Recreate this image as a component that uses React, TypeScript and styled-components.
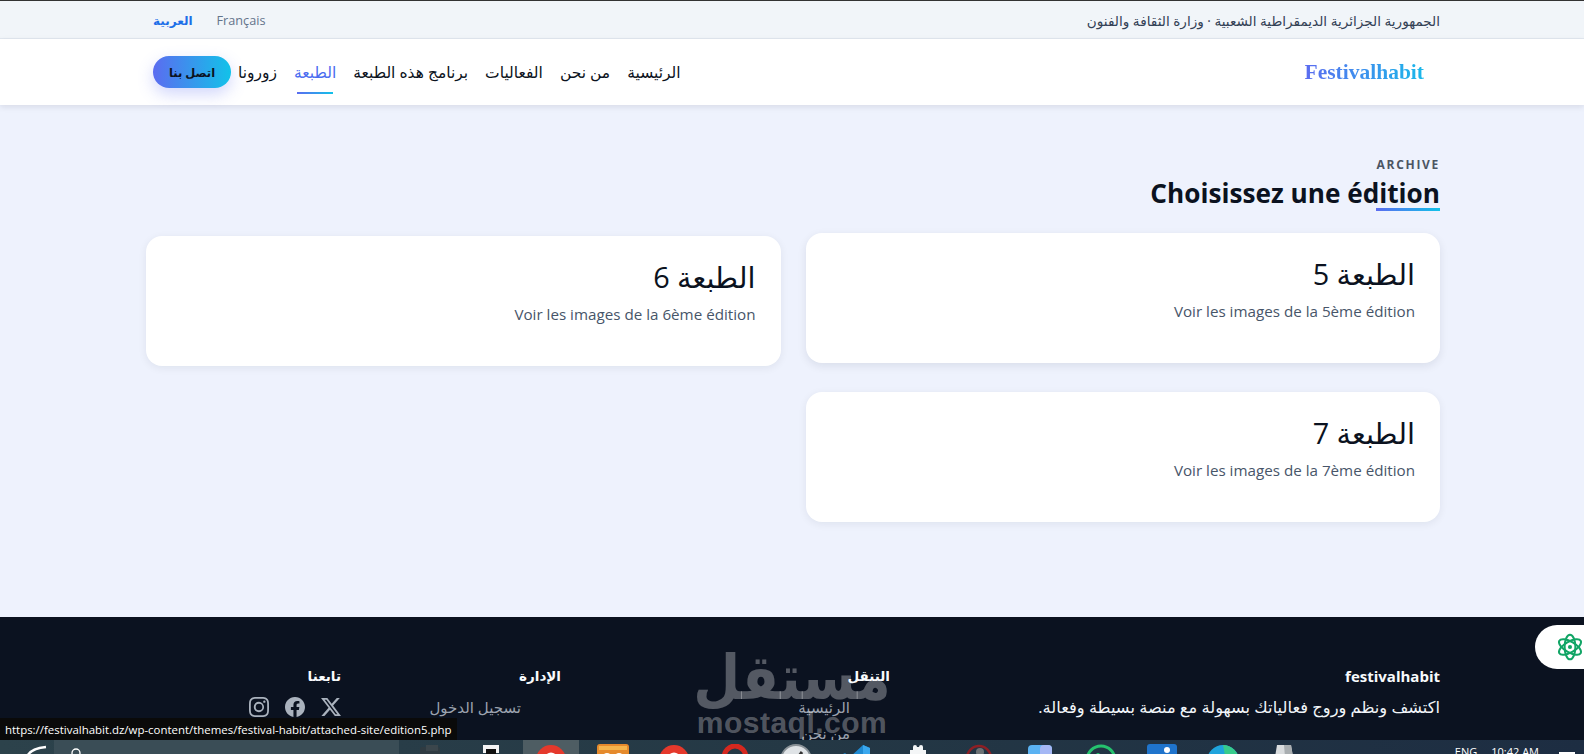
import React from 'react';
import styled, { createGlobalStyle } from 'styled-components';
import { BsFacebook, BsInstagram, BsTwitterX } from 'react-icons/bs';

const GRADIENT = 'linear-gradient(90deg, #5b6cf0, #12c2e9)';
const FONT = '"Open Sans", "DejaVu Sans", sans-serif';

const GlobalStyle = createGlobalStyle`
  html, body {
    margin: 0;
    height: 754px;
    overflow: hidden;
    background: #eef2fd;
    font-family: ${FONT};
  }
  * { box-sizing: border-box; }
`;

const Screen = styled.div`
  height: 754px;
  display: flex;
  flex-direction: column;
`;
const Viewport = styled.div`
  position: relative;
  flex: 1;
  min-height: 0;
  overflow: hidden;
  direction: rtl;
  display: flex;
  flex-direction: column;
  background: #eef2fd;
`;
const Container = styled.div`
  width: 1294px;
  margin-right: 144px;
`;

const TopStrip = styled.div`
  height: 39px;
  flex: none;
  padding-top: 1px;
  background: #f1f5f9;
  border-top: 1px solid #333;
  border-bottom: 1px solid #e2e8f0;
`;
const TopStripInner = styled(Container)`
  height: 100%;
  display: flex;
  align-items: center;
  justify-content: space-between;
`;
const Ministry = styled.span`
  font-size: 13.6px;
  color: #334155;
`;
const Langs = styled.div`
  display: flex;
  align-items: center;
  gap: 24px;
  padding-left: 7px;
`;
const Lang = styled.a<{ $active?: boolean }>`
  font-size: ${(p) => (p.$active ? '12px' : '12.7px')};
  font-weight: ${(p) => (p.$active ? 700 : 400)};
  color: ${(p) => (p.$active ? '#1d6fe8' : '#64748b')};
`;

const NavBar = styled.header`
  position: relative;
  z-index: 2;
  height: 66px;
  flex: none;
  background: #fff;
  box-shadow: 0 2px 6px rgba(15, 23, 42, 0.1);
`;
const NavInner = styled(Container)`
  height: 100%;
  display: flex;
  align-items: center;
  justify-content: space-between;
`;
const Logo = styled.div`
  padding-right: 16px;
  font-family: "Liberation Serif", serif;
  font-weight: 700;
  font-size: 21.5px;
  direction: ltr;
  background: ${GRADIENT};
  -webkit-background-clip: text;
  background-clip: text;
  color: transparent;
`;
const NavLinks = styled.nav`
  display: flex;
  align-items: center;
  gap: 17px;
  padding-left: 7px;
`;
const NavLink = styled.a<{ $active?: boolean }>`
  position: relative;
  font-size: 15.5px;
  line-height: 21px;
  font-weight: 500;
  color: ${(p) => (p.$active ? '#4a6cf0' : '#0b1220')};
  ${(p) =>
    p.$active &&
    `&::after {
      content: '';
      position: absolute;
      right: 3px;
      left: 3px;
      bottom: -11px;
      height: 2px;
      background: ${GRADIENT};
    }`}
`;
const ContactButton = styled.a`
  width: 78px;
  height: 32px;
  margin-right: -10px;
  border-radius: 16px;
  display: flex;
  align-items: center;
  justify-content: center;
  font-size: 11.5px;
  font-weight: 700;
  color: #0b1220;
  background: linear-gradient(270deg, #12c2e9, #5b6cf0);
  box-shadow: 0 6px 16px rgba(91, 108, 240, 0.28);
`;

const Main = styled.main`
  flex: none;
  height: 512px;
  padding-top: 52px;
`;
const Eyebrow = styled.div`
  font-size: 12px;
  font-weight: 700;
  letter-spacing: 1.7px;
  line-height: 16px;
  color: #4b5563;
  direction: ltr;
  text-align: right;
`;
const Heading = styled.h2`
  display: table;
  position: relative;
  margin: 2px 0 0;
  font-size: 26.2px;
  line-height: 36px;
  font-weight: 700;
  color: #0b1220;
  direction: ltr;
  &::after {
    content: '';
    position: absolute;
    right: 0;
    bottom: 0;
    width: 64px;
    height: 3px;
    background: ${GRADIENT};
  }
`;
const CardGrid = styled.div`
  display: grid;
  grid-template-columns: 1fr 1fr;
  gap: 26px 25px;
  margin-top: 25px;
`;
const Card = styled.a<{ $hovered?: boolean }>`
  height: 130px;
  padding: 23px 25px;
  border-radius: 16px;
  background: #fff;
  box-shadow: ${(p) =>
    p.$hovered ? '0 3px 10px rgba(15, 23, 42, 0.09)' : '0 2px 8px rgba(15, 23, 42, 0.07)'};
  transform: translateY(${(p) => (p.$hovered ? '-3px' : '0')});
`;
const CardTitle = styled.h3`
  margin: 0;
  font-size: 28.8px;
  line-height: 36px;
  font-weight: 400;
  color: #0b1220;
`;
const CardText = styled.p`
  margin: 9px 0 0;
  font-size: 15.2px;
  line-height: 20px;
  color: #475569;
  direction: ltr;
  text-align: right;
`;

const Footer = styled.footer`
  flex: 1;
  background: #0b1220;
  padding-top: 49px;
`;
const FooterGrid = styled(Container)`
  display: grid;
  grid-template-columns: 550px 329px 220px 195px;
`;
const FooterHead = styled.h4<{ $brand?: boolean }>`
  margin: 0 0 11px;
  font-size: ${(p) => (p.$brand ? '15px' : '13.5px')};
  line-height: 20px;
  font-weight: 700;
  color: #f8fafc;
`;
const FooterAbout = styled.p`
  margin: 0;
  font-size: 16.3px;
  line-height: 20px;
  color: #f1f5f9;
`;
const FooterList = styled.ul`
  list-style: none;
  margin: 0;
  padding: 0 40px 0 0;
  display: flex;
  flex-direction: column;
  gap: 6px;
`;
const FooterLink = styled.li`
  font-size: 15px;
  line-height: 20px;
  color: #9ca3af;
`;
const SocialRow = styled.div`
  display: flex;
  gap: 16px;
  margin-top: 2px;
  color: #aab2bd;
  font-size: 20px;
`;

const Watermark = styled.div`
  position: absolute;
  left: 697px;
  top: 648px;
  width: 190px;
  display: flex;
  flex-direction: column;
  align-items: center;
  color: rgba(255, 255, 255, 0.3);
  pointer-events: none;
`;
const WatermarkArabic = styled.div`
  font-family: "DejaVu Sans", sans-serif;
  font-weight: 700;
  font-size: 54px;
  line-height: 60px;
  transform: scaleY(1.15);
`;
const WatermarkLatin = styled.div`
  font-family: "Liberation Sans", sans-serif;
  font-weight: 700;
  font-size: 30px;
  line-height: 30px;
  letter-spacing: 0.5px;
  direction: ltr;
`;

const StatusTip = styled.div`
  position: absolute;
  left: 0;
  bottom: 0;
  width: 457px;
  height: 22px;
  padding-left: 5px;
  direction: ltr;
  display: flex;
  align-items: center;
  background: #0a0a0a;
  color: #fff;
  font-size: 11.45px;
  white-space: nowrap;
`;
const BotButton = styled.button`
  position: absolute;
  right: 0;
  top: 625px;
  width: 49px;
  height: 44px;
  padding: 0 0 0 21px;
  border: 0;
  border-radius: 22px 0 0 22px;
  background: #fff;
  direction: ltr;
  display: flex;
  align-items: center;
  overflow: hidden;
`;

const Taskbar = styled.div`
  height: 14px;
  flex: none;
  display: flex;
  overflow: hidden;
  background: linear-gradient(90deg, #2c424b, #243845 50%, #1d2d42);
`;
const StartTile = styled.div`
  width: 54px;
  flex: none;
  overflow: hidden;
`;
const SearchBox = styled.div`
  width: 345px;
  flex: none;
  background: #3a4d56;
  padding: 4px 0 0 16px;
`;
const TaskTile = styled.div<{ $active?: boolean }>`
  width: ${(p) => (p.$active ? '56px' : '61px')};
  margin: ${(p) => (p.$active ? '0 3px 0 2px' : '0')};
  flex: none;
  display: flex;
  justify-content: center;
  padding-top: 4px;
  background: ${(p) => (p.$active ? '#4e5d63' : 'transparent')};
`;
const Tray = styled.div`
  flex: 1;
  position: relative;
  display: flex;
  justify-content: flex-end;
  gap: 14px;
  padding: 5px 45px 0 0;
  color: #fff;
  font-size: 11px;
  line-height: 14px;
  font-family: "Open Sans", sans-serif;
  white-space: nowrap;
`;
const TrayMark = styled.span`
  position: absolute;
  right: 9px;
  bottom: 0;
  width: 16px;
  height: 2px;
  background: #fff;
`;

const ChromeIcon = () => (
  <svg width="32" height="32" viewBox="0 0 32 32">
    <circle cx="16" cy="16" r="15" fill="#e5392c" />
    <path d="M16 16L30 24A15 15 0 0 1 2 24Z" fill="#2fa84f" />
    <path d="M16 16L31 14A15 15 0 0 1 22 30Z" fill="#f4b82e" />
    <circle cx="16" cy="15" r="6.5" fill="#fff" />
    <circle cx="16" cy="15" r="4.5" fill="#cfe3fb" />
  </svg>
);

const taskIcons: React.ReactNode[] = [
  <svg key="a" width="26" height="26" viewBox="0 0 26 26">
    <rect x="3" y="3" width="20" height="20" rx="2" fill="#2f3b42" />
    <path d="M9 1h12v6H9z" fill="#3b464c" />
  </svg>,
  <svg key="b" width="20" height="26" viewBox="0 0 20 26">
    <path d="M2 1h16v8H2z" fill="#f4f4f4" />
    <path d="M5 5h10v14H5z" fill="#111" />
  </svg>,
  <ChromeIcon key="c" />,
  <svg key="d" width="32" height="32" viewBox="0 0 32 32">
    <rect width="32" height="30" rx="3" fill="#e58a2c" />
    <rect x="2" y="2" width="28" height="4" fill="#f5b54c" />
    <circle cx="10" cy="14" r="5" fill="#fff" />
    <circle cx="22" cy="14" r="5" fill="#fff" />
  </svg>,
  <ChromeIcon key="e" />,
  <svg key="f" width="28" height="28" viewBox="0 0 28 28">
    <ellipse cx="14" cy="14" rx="11" ry="12" fill="none" stroke="#d5281f" strokeWidth="5" />
  </svg>,
  <svg key="g" width="32" height="32" viewBox="0 0 32 32">
    <circle cx="16" cy="16" r="15" fill="#dfe3e6" stroke="#8a9297" strokeWidth="2" />
    <path d="M16 16L22 8" stroke="#333" strokeWidth="3" />
  </svg>,
  <svg key="h" width="30" height="30" viewBox="0 0 30 30">
    <path d="M21 1l7 3v22l-7 3L8 17l-5 4-2-1v-10l2-1 5 4z" fill="#1f8ad2" />
    <path d="M21 1l7 3v22l-7 3z" fill="#3aa8ee" />
  </svg>,
  <svg key="i" width="18" height="20" viewBox="0 0 18 20">
    <path d="M4 3a2 2 0 0 1 4 0h2a2 2 0 0 1 4 0v3h3v8H1V6h3z" fill="#f4f6f7" />
  </svg>,
  <svg key="j" width="28" height="28" viewBox="0 0 28 28">
    <circle cx="14" cy="14" r="12" fill="none" stroke="#8e1f24" strokeWidth="2.5" />
    <circle cx="15" cy="8" r="4" fill="#6d7275" />
  </svg>,
  <svg key="k" width="26" height="28" viewBox="0 0 26 28">
    <rect x="1" y="1" width="24" height="26" rx="4" fill="#5ab2f2" />
    <rect x="13" y="1" width="12" height="26" rx="4" fill="#a5b8f5" />
  </svg>,
  <svg key="l" width="32" height="32" viewBox="0 0 32 32">
    <circle cx="16" cy="16" r="14" fill="none" stroke="#25c26e" strokeWidth="3" />
    <circle cx="13" cy="11" r="2" fill="#25c26e" />
  </svg>,
  <svg key="m" width="30" height="30" viewBox="0 0 30 30">
    <rect width="30" height="30" rx="3" fill="#1f74cc" />
    <circle cx="20" cy="6" r="3" fill="#fff" />
  </svg>,
  <svg key="n" width="34" height="34" viewBox="0 0 34 34">
    <circle cx="17" cy="17" r="16" fill="#1fa4dc" />
    <path d="M17 1A16 16 0 0 1 33 17H20z" fill="#37cc8c" />
    <path d="M8 12h14v10H8z" fill="#155a9c" />
  </svg>,
  <svg key="o" width="24" height="26" viewBox="0 0 24 26">
    <path d="M5 1h14l4 24H1z" fill="#d9dcde" />
    <path d="M12 1h7l4 24h-9z" fill="#a9aeb1" />
  </svg>,
];

const AtomIcon = () => (
  <svg width="34" height="34" viewBox="0 0 34 34" fill="none" stroke="#12a566" strokeWidth="2.4">
    <ellipse cx="17" cy="17" rx="15" ry="6.5" transform="rotate(30 17 17)" />
    <ellipse cx="17" cy="17" rx="15" ry="6.5" transform="rotate(90 17 17)" />
    <ellipse cx="17" cy="17" rx="15" ry="6.5" transform="rotate(150 17 17)" />
    <circle cx="17" cy="17" r="2.5" fill="#12a566" stroke="none" />
  </svg>
);

const editions = [
  { number: 5, ordinal: '5ème', hovered: true },
  { number: 6, ordinal: '6ème' },
  { number: 7, ordinal: '7ème' },
];

const App: React.FC = () => (
  <Screen>
    <GlobalStyle />
    <Viewport>
      <TopStrip>
        <TopStripInner>
          <Ministry>الجمهورية الجزائرية الديمقراطية الشعبية · وزارة الثقافة والفنون</Ministry>
          <Langs>
            <Lang>Français</Lang>
            <Lang $active>العربية</Lang>
          </Langs>
        </TopStripInner>
      </TopStrip>
      <NavBar>
        <NavInner>
          <Logo>Festivalhabit</Logo>
          <NavLinks>
            <NavLink>الرئيسية</NavLink>
            <NavLink>من نحن</NavLink>
            <NavLink>الفعاليات</NavLink>
            <NavLink>برنامج هذه الطبعة</NavLink>
            <NavLink $active>الطبعة</NavLink>
            <NavLink>زورونا</NavLink>
            <ContactButton>اتصل بنا</ContactButton>
          </NavLinks>
        </NavInner>
      </NavBar>
      <Main>
        <Container>
          <Eyebrow>ARCHIVE</Eyebrow>
          <Heading>Choisissez une édition</Heading>
          <CardGrid>
            {editions.map((e) => (
              <Card key={e.number} $hovered={e.hovered}>
                <CardTitle>الطبعة {e.number}</CardTitle>
                <CardText>Voir les images de la {e.ordinal} édition</CardText>
              </Card>
            ))}
          </CardGrid>
        </Container>
      </Main>
      <Footer>
        <FooterGrid>
          <div>
            <FooterHead $brand>festivalhabit</FooterHead>
            <FooterAbout>اكتشف ونظم وروج فعالياتك بسهولة مع منصة بسيطة وفعالة.</FooterAbout>
          </div>
          <div>
            <FooterHead>التنقل</FooterHead>
            <FooterList>
              <FooterLink>الرئيسية</FooterLink>
              <FooterLink>من نحن</FooterLink>
            </FooterList>
          </div>
          <div>
            <FooterHead>الإدارة</FooterHead>
            <FooterList>
              <FooterLink>تسجيل الدخول</FooterLink>
            </FooterList>
          </div>
          <div>
            <FooterHead>تابعنا</FooterHead>
            <SocialRow>
              <BsTwitterX />
              <BsFacebook />
              <BsInstagram />
            </SocialRow>
          </div>
        </FooterGrid>
      </Footer>
      <Watermark>
        <WatermarkArabic>مستقل</WatermarkArabic>
        <WatermarkLatin>mostaql.com</WatermarkLatin>
      </Watermark>
      <BotButton>
        <AtomIcon />
      </BotButton>
      <StatusTip>https://festivalhabit.dz/wp-content/themes/festival-habit/attached-site/edition5.php</StatusTip>
    </Viewport>
    <Taskbar>
      <StartTile>
        <svg width="54" height="14" viewBox="0 0 54 14">
          <path d="M27 14C29 8 36 5 46 4" fill="none" stroke="#fff" strokeWidth="2.5" />
        </svg>
      </StartTile>
      <SearchBox>
        <svg width="14" height="14" viewBox="0 0 14 14">
          <circle cx="6" cy="6" r="4" fill="none" stroke="#fff" strokeWidth="1.3" />
        </svg>
      </SearchBox>
      {taskIcons.map((icon, i) => (
        <TaskTile key={i} $active={i === 2}>
          {icon}
        </TaskTile>
      ))}
      <Tray>
        <span>ENG</span>
        <span>10:42 AM</span>
        <TrayMark />
      </Tray>
    </Taskbar>
  </Screen>
);

export default App;
